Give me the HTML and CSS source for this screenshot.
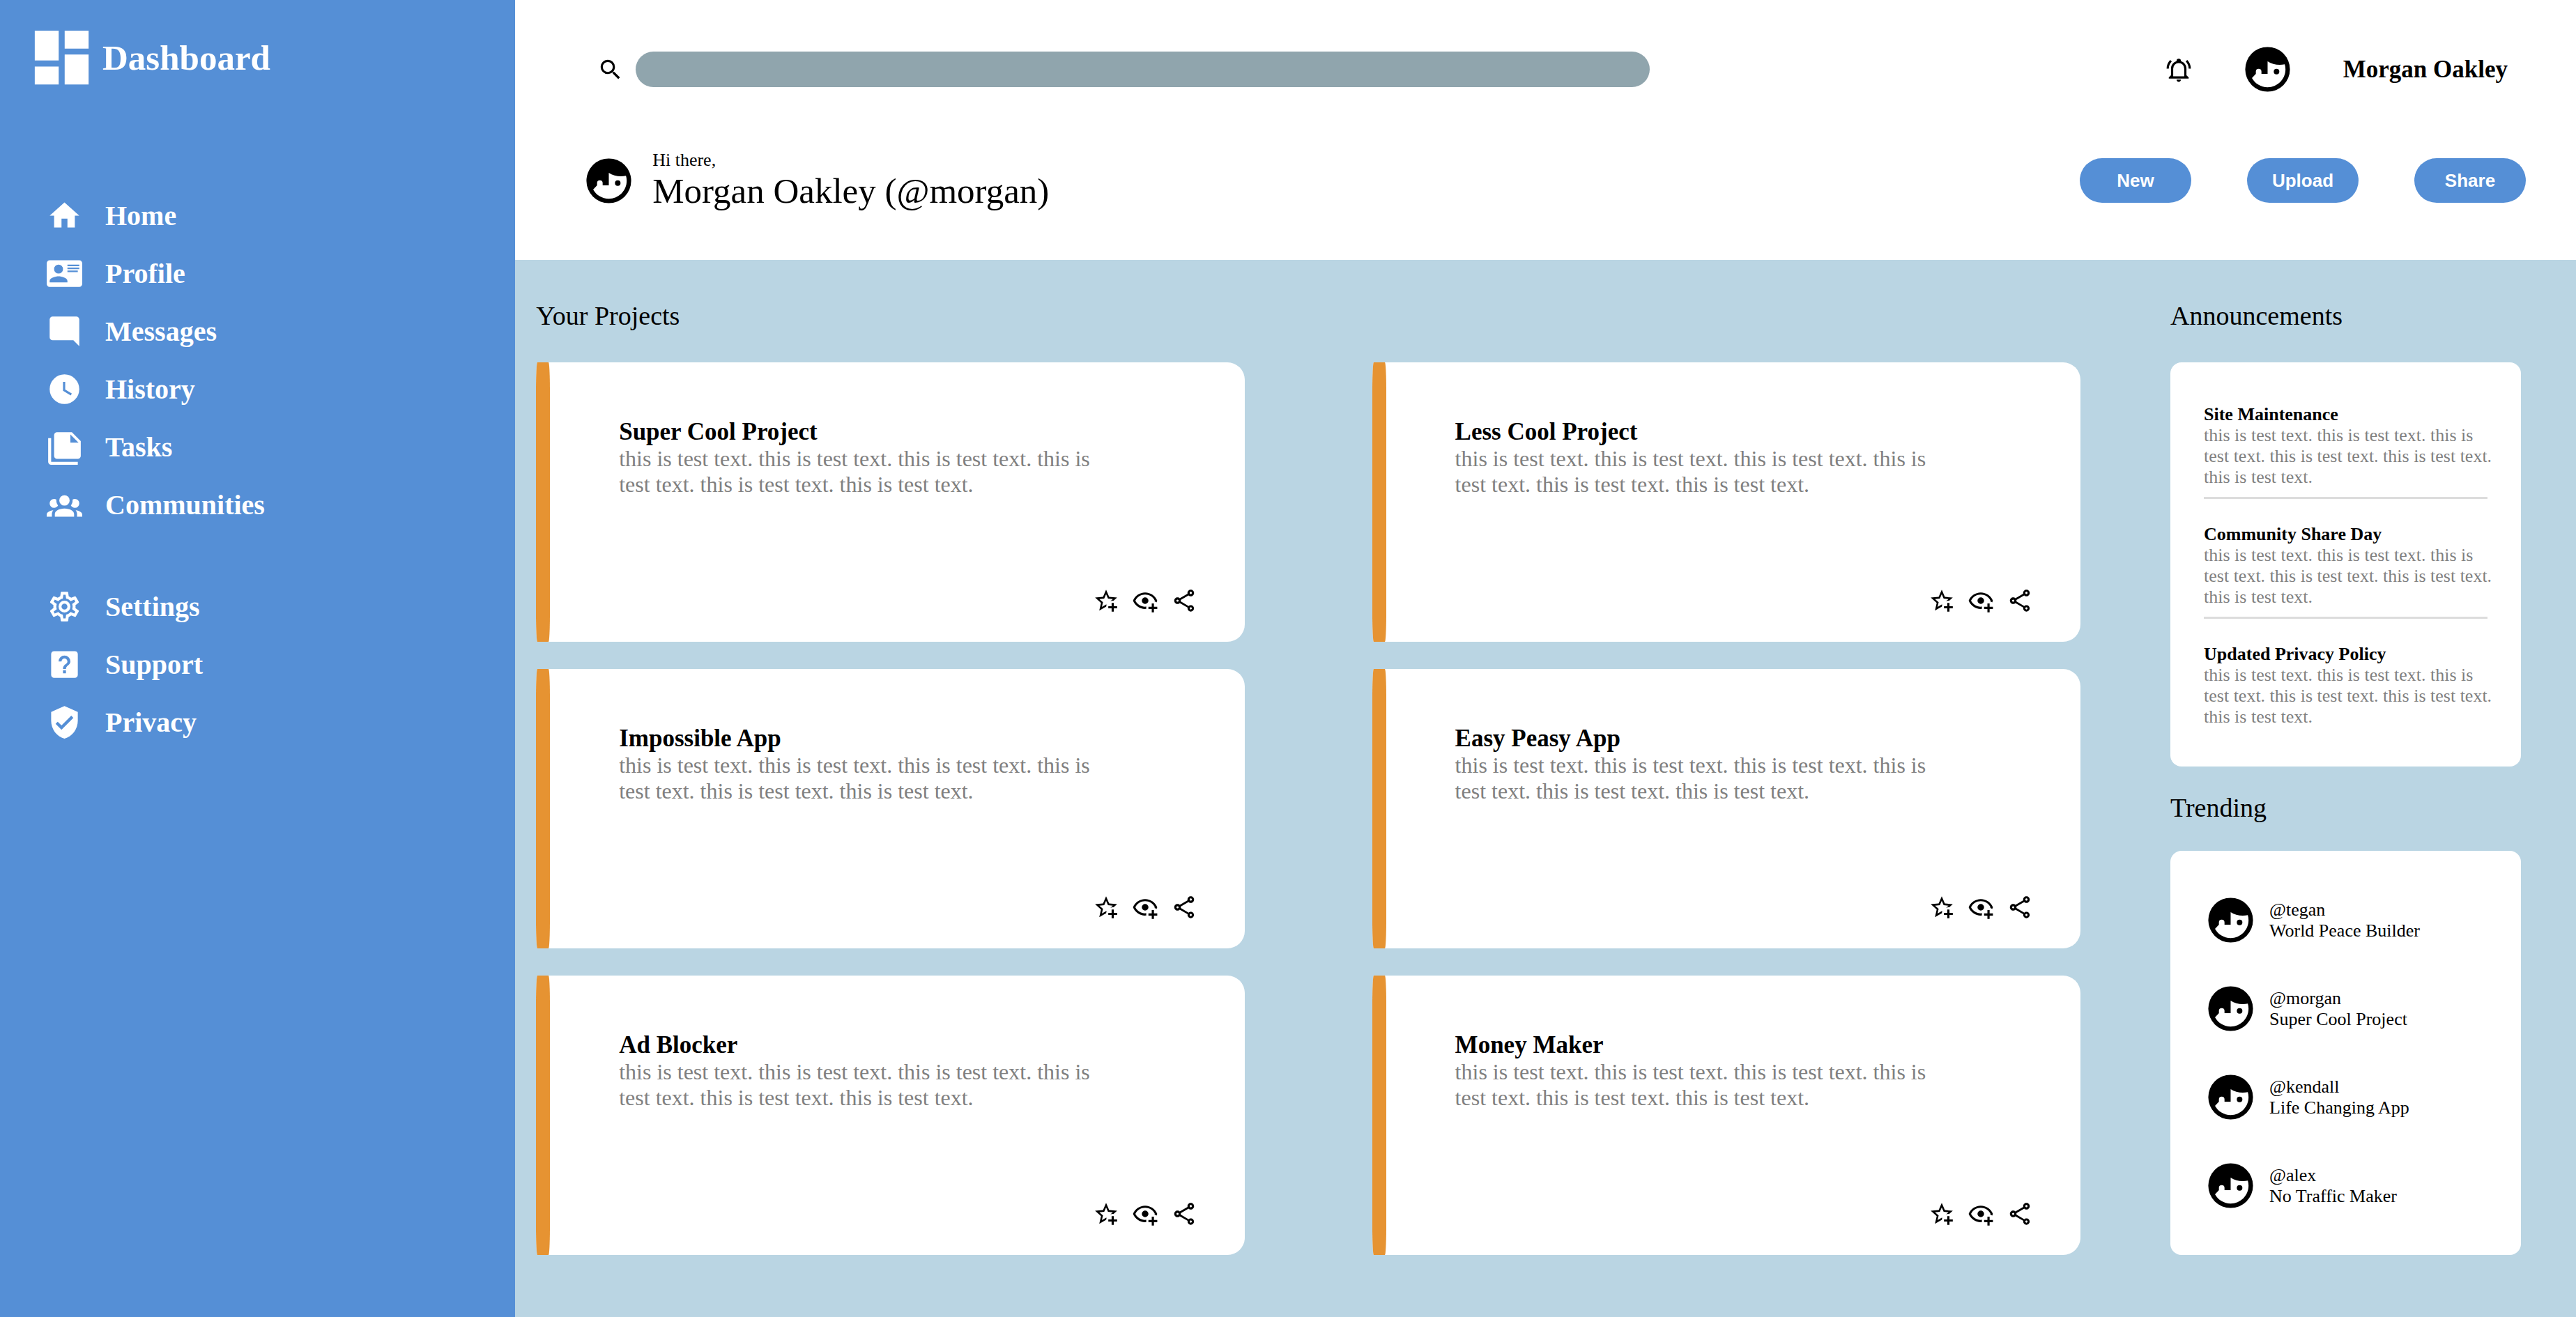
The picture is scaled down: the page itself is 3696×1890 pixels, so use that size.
FILE: index.html
```html
<!DOCTYPE html>
<html lang="en">
<head>
<meta charset="utf-8">
<title>Dashboard</title>
<meta name="viewport" content="width=device-width, initial-scale=1">
<link rel="stylesheet" href="styles.css">
</head>
<body>
<svg class="sprite" aria-hidden="true">
  <symbol id="face" viewBox="0 0 24 24"><path d="M12,2A10,10 0 0,0 2,12A10,10 0 0,0 12,22A10,10 0 0,0 22,12A10,10 0 0,0 12,2M12,8.39C13.57,9.4 15.42,10 17.42,10C18.2,10 18.95,9.91 19.67,9.74C19.88,10.45 20,11.21 20,12C20,16.41 16.41,20 12,20C9,20 6.39,18.34 5,15.89L6.75,14V13A1.25,1.25 0 0,1 8,11.75A1.25,1.25 0 0,1 9.25,13V14H12M16,11.75A1.25,1.25 0 0,0 14.75,13A1.25,1.25 0 0,0 16,14.25A1.25,1.25 0 0,0 17.25,13A1.25,1.25 0 0,0 16,11.75Z"/></symbol>
  <symbol id="star" viewBox="0 0 24 24"><path d="M5.8 21L7.4 14L2 9.2L9.2 8.6L12 2L14.8 8.6L22 9.2L18.8 12H18C17.3 12 16.6 12.1 15.9 12.4L18.1 10.5L13.7 10.1L12 6.1L10.3 10.1L5.9 10.5L9.2 13.4L8.2 17.7L12 15.4L12.5 15.7C12.3 16.2 12.1 16.8 12.1 17.3L5.8 21M17 14V17H14V19H17V22H19V19H22V17H19V14H17Z"/></symbol>
  <symbol id="eye" viewBox="0 0 24 24"><path d="M12,4.5C7,4.5 2.73,7.61 1,12C2.73,16.39 7,19.5 12,19.5C12.36,19.5 12.72,19.5 13.08,19.45C13.03,19.13 13,18.82 13,18.5C13,18.14 13.04,17.78 13.1,17.42C12.74,17.46 12.37,17.5 12,17.5C8.24,17.5 4.83,15.36 3.18,12C4.83,8.64 8.24,6.5 12,6.5C15.76,6.5 19.17,8.64 20.82,12C20.7,12.24 20.56,12.45 20.43,12.68C21.09,12.84 21.72,13.11 22.29,13.5C22.56,13 22.8,12.5 23,12C21.27,7.61 17,4.5 12,4.5M12,9A3,3 0 0,0 9,12A3,3 0 0,0 12,15A3,3 0 0,0 15,12A3,3 0 0,0 12,9M18,14.5V17.5H15V19.5H18V22.5H20V19.5H23V17.5H20V14.5H18Z"/></symbol>
  <symbol id="share" viewBox="0 0 24 24"><path d="M18 16.08C17.24 16.08 16.56 16.38 16.04 16.85L8.91 12.7C8.96 12.47 9 12.24 9 12S8.96 11.53 8.91 11.3L15.96 7.19C16.5 7.69 17.21 8 18 8C19.66 8 21 6.66 21 5S19.66 2 18 2 15 3.34 15 5C15 5.24 15.04 5.47 15.09 5.7L8.04 9.81C7.5 9.31 6.79 9 6 9C4.34 9 3 10.34 3 12S4.34 15 6 15C6.79 15 7.5 14.69 8.04 14.19L15.16 18.34C15.11 18.55 15.08 18.77 15.08 19C15.08 20.61 16.39 21.91 18 21.91S20.92 20.61 20.92 19C20.92 17.39 19.61 16.08 18 16.08M18 4C18.55 4 19 4.45 19 5S18.55 6 18 6 17 5.55 17 5 17.45 4 18 4M6 13C5.45 13 5 12.55 5 12S5.45 11 6 11 7 11.45 7 12 6.55 13 6 13M18 20C17.45 20 17 19.55 17 19S17.45 18 18 18 19 18.45 19 19 18.55 20 18 20Z"/></symbol>
</svg>

<div class="layout">
  <aside class="sidebar">
    <div class="brand">
      <svg class="brand-icon" viewBox="0 0 24 24" aria-hidden="true"><path d="M13,3V9H21V3M13,21H21V11H13M3,21H11V15H3M3,13H11V3H3V13Z"/></svg>
      <h1>Dashboard</h1>
    </div>
    <nav class="nav">
      <ul class="nav-group">
        <li><a href="#"><svg viewBox="0 0 24 24" aria-hidden="true"><path d="M10,20V14H14V20H19V12H22L12,3L2,12H5V20H10Z"/></svg>Home</a></li>
        <li><a href="#"><svg viewBox="0 0 24 24" aria-hidden="true"><path d="M2,3H22C23.05,3 24,3.95 24,5V19C24,20.05 23.05,21 22,21H2C0.95,21 0,20.05 0,19V5C0,3.95 0.95,3 2,3M14,6V7H22V6H14M14,8V9H21.5L22,9V8H14M14,10V11H21V10H14M8,13.91C6,13.91 2,15 2,17V18H14V17C14,15 10,13.91 8,13.91M8,6A3,3 0 0,0 5,9A3,3 0 0,0 8,12A3,3 0 0,0 11,9A3,3 0 0,0 8,6Z"/></svg>Profile</a></li>
        <li><a href="#"><svg viewBox="0 0 24 24" aria-hidden="true"><path d="M22,4A2,2 0 0,0 20,2H4A2,2 0 0,0 2,4V16A2,2 0 0,0 4,18H18L22,22V4Z"/></svg>Messages</a></li>
        <li><a href="#"><svg viewBox="0 0 24 24" aria-hidden="true"><path d="M12,2A10,10 0 0,0 2,12A10,10 0 0,0 12,22A10,10 0 0,0 22,12A10,10 0 0,0 12,2M16.2,16.2L11,13V7H12.5V12.2L17,14.9L16.2,16.2Z"/></svg>History</a></li>
        <li><a href="#"><svg viewBox="0 0 24 24" aria-hidden="true"><path d="M16 9H21.5L16 3.5V9M7 2H17L23 8V18C23 19.11 22.11 20 21 20H7C5.89 20 5 19.1 5 18V4C5 2.89 5.89 2 7 2M3 6V22H21V24H3C1.9 24 1 23.11 1 22V6H3Z"/></svg>Tasks</a></li>
        <li><a href="#"><svg viewBox="0 0 24 24" aria-hidden="true"><path d="M12,5.5A3.5,3.5 0 0,1 15.5,9A3.5,3.5 0 0,1 12,12.5A3.5,3.5 0 0,1 8.5,9A3.5,3.5 0 0,1 12,5.5M5,8C5.56,8 6.08,8.15 6.53,8.42C6.38,9.85 6.8,11.27 7.66,12.38C7.16,13.34 6.16,14 5,14A3,3 0 0,1 2,11A3,3 0 0,1 5,8M19,8A3,3 0 0,1 22,11A3,3 0 0,1 19,14C17.84,14 16.84,13.34 16.34,12.38C17.2,11.27 17.62,9.85 17.47,8.42C17.92,8.15 18.44,8 19,8M5.5,18.25C5.5,16.18 8.41,14.5 12,14.5C15.59,14.5 18.5,16.18 18.5,18.25V20H5.5V18.25M0,20V18.5C0,17.11 1.89,15.94 4.45,15.6C3.86,16.28 3.5,17.22 3.5,18.25V20H0M24,20H20.5V18.25C20.5,17.22 20.14,16.28 19.55,15.6C22.11,15.94 24,17.11 24,18.5V20Z"/></svg>Communities</a></li>
      </ul>
      <ul class="nav-group">
        <li><a href="#"><svg viewBox="0 0 24 24" aria-hidden="true"><path d="M12,8A4,4 0 0,1 16,12A4,4 0 0,1 12,16A4,4 0 0,1 8,12A4,4 0 0,1 12,8M12,10A2,2 0 0,0 10,12A2,2 0 0,0 12,14A2,2 0 0,0 14,12A2,2 0 0,0 12,10M10,22C9.75,22 9.54,21.82 9.5,21.58L9.13,18.93C8.5,18.68 7.96,18.34 7.44,17.94L4.95,18.95C4.73,19.03 4.46,18.95 4.34,18.73L2.34,15.27C2.21,15.05 2.27,14.78 2.46,14.63L4.57,12.97L4.5,12L4.57,11L2.46,9.37C2.27,9.22 2.21,8.95 2.34,8.73L4.34,5.27C4.46,5.05 4.73,4.96 4.95,5.05L7.44,6.05C7.96,5.66 8.5,5.32 9.13,5.07L9.5,2.42C9.54,2.18 9.75,2 10,2H14C14.25,2 14.46,2.18 14.5,2.42L14.87,5.07C15.5,5.32 16.04,5.66 16.56,6.05L19.05,5.05C19.27,4.96 19.54,5.05 19.66,5.27L21.66,8.73C21.79,8.95 21.73,9.22 21.54,9.37L19.43,11L19.5,12L19.43,13L21.54,14.63C21.73,14.78 21.79,15.05 21.66,15.27L19.66,18.73C19.54,18.95 19.27,19.04 19.05,18.95L16.56,17.95C16.04,18.34 15.5,18.68 14.87,18.93L14.5,21.58C14.46,21.82 14.25,22 14,22H10M11.25,4L10.88,6.61C9.68,6.86 8.62,7.5 7.85,8.39L5.44,7.35L4.69,8.65L6.8,10.2C6.4,11.37 6.4,12.64 6.8,13.8L4.68,15.36L5.43,16.66L7.86,15.62C8.63,16.5 9.68,17.14 10.87,17.38L11.24,20H12.76L13.13,17.39C14.32,17.14 15.37,16.5 16.14,15.62L18.57,16.66L19.32,15.36L17.2,13.81C17.6,12.64 17.6,11.37 17.2,10.2L19.31,8.65L18.56,7.35L16.15,8.39C15.38,7.5 14.32,6.86 13.12,6.62L12.75,4H11.25Z"/></svg>Settings</a></li>
        <li><a href="#"><svg viewBox="0 0 24 24" aria-hidden="true"><path fill-rule="evenodd" d="M5,3H19A2,2 0 0,1 21,5V19A2,2 0 0,1 19,21H5A2,2 0 0,1 3,19V5A2,2 0 0,1 5,3ZM11,18H13V16H11V18ZM12,6A4,4 0 0,0 8,10H10A2,2 0 0,1 12,8A2,2 0 0,1 14,10C14,12 11,11.75 11,15H13C13,12.75 16,12.5 16,10A4,4 0 0,0 12,6Z"/></svg>Support</a></li>
        <li><a href="#"><svg viewBox="0 0 24 24" aria-hidden="true"><path d="M10,17L6,13L7.41,11.59L10,14.17L16.59,7.58L18,9M12,1L3,5V11C3,16.55 6.84,21.74 12,23C17.16,21.74 21,16.55 21,11V5L12,1Z"/></svg>Privacy</a></li>
      </ul>
    </nav>
  </aside>

  <div class="page">
    <header class="header">
      <div class="topbar">
        <form class="search" role="search">
          <label for="search"><svg class="icon" viewBox="0 0 24 24" role="img" aria-label="Search"><path d="M9.5,3A6.5,6.5 0 0,1 16,9.5C16,11.11 15.41,12.59 14.44,13.73L14.71,14H15.5L20.5,19L19,20.5L14,15.5V14.71L13.73,14.44C12.59,15.41 11.11,16 9.5,16A6.5,6.5 0 0,1 3,9.5A6.5,6.5 0 0,1 9.5,3M9.5,5C7,5 5,7 5,9.5C5,12 7,14 9.5,14C12,14 14,12 14,9.5C14,7 12,5 9.5,5Z"/></svg></label>
          <input id="search" type="search">
        </form>
        <div class="account">
          <button class="icon-button" type="button" aria-label="Notifications"><svg class="icon" viewBox="0 0 24 24" aria-hidden="true"><path d="M10,21H14C14,22.1 13.1,23 12,23C10.9,23 10,22.1 10,21M21,19V20H3V19L5,17V11C5,7.9 7.03,5.17 10,4.29C10,4.19 10,4.1 10,4A2,2 0 0,1 12,2A2,2 0 0,1 14,4C14,4.1 14,4.19 14,4.29C16.97,5.17 19,7.9 19,11V17L21,19M17,11A5,5 0 0,0 12,6A5,5 0 0,0 7,11V18H17V11M19.75,3.19L18.33,4.61C20.04,6.3 21,8.6 21,11H23C23,8.07 21.84,5.25 19.75,3.19M1,11H3C3,8.6 3.96,6.3 5.67,4.61L4.25,3.19C2.16,5.25 1,8.07 1,11Z"/></svg></button>
          <svg class="avatar" aria-hidden="true"><use href="#face"/></svg>
          <span class="account-name">Morgan Oakley</span>
        </div>
      </div>
      <div class="welcome">
        <svg class="avatar" aria-hidden="true"><use href="#face"/></svg>
        <div class="greeting">
          <p class="greeting-hi">Hi there,</p>
          <p class="greeting-name">Morgan Oakley (@morgan)</p>
        </div>
        <div class="actions">
          <button type="button">New</button>
          <button type="button">Upload</button>
          <button type="button">Share</button>
        </div>
      </div>
    </header>

    <main class="content">
      <section class="projects">
        <h2>Your Projects</h2>
        <div class="cards">
          <article class="card">
            <span class="card-stripe"></span>
            <div class="card-body">
              <h3>Super Cool Project</h3>
              <p>this is test text. this is test text. this is test text. this is test text. this is test text. this is test text.</p>
              <div class="card-tools">
                <button class="icon-button" type="button" aria-label="Star"><svg class="icon"><use href="#star"/></svg></button>
                <button class="icon-button" type="button" aria-label="Watch"><svg class="icon"><use href="#eye"/></svg></button>
                <button class="icon-button" type="button" aria-label="Share"><svg class="icon"><use href="#share"/></svg></button>
              </div>
            </div>
          </article>
          <article class="card">
            <span class="card-stripe"></span>
            <div class="card-body">
              <h3>Less Cool Project</h3>
              <p>this is test text. this is test text. this is test text. this is test text. this is test text. this is test text.</p>
              <div class="card-tools">
                <button class="icon-button" type="button" aria-label="Star"><svg class="icon"><use href="#star"/></svg></button>
                <button class="icon-button" type="button" aria-label="Watch"><svg class="icon"><use href="#eye"/></svg></button>
                <button class="icon-button" type="button" aria-label="Share"><svg class="icon"><use href="#share"/></svg></button>
              </div>
            </div>
          </article>
          <article class="card">
            <span class="card-stripe"></span>
            <div class="card-body">
              <h3>Impossible App</h3>
              <p>this is test text. this is test text. this is test text. this is test text. this is test text. this is test text.</p>
              <div class="card-tools">
                <button class="icon-button" type="button" aria-label="Star"><svg class="icon"><use href="#star"/></svg></button>
                <button class="icon-button" type="button" aria-label="Watch"><svg class="icon"><use href="#eye"/></svg></button>
                <button class="icon-button" type="button" aria-label="Share"><svg class="icon"><use href="#share"/></svg></button>
              </div>
            </div>
          </article>
          <article class="card">
            <span class="card-stripe"></span>
            <div class="card-body">
              <h3>Easy Peasy App</h3>
              <p>this is test text. this is test text. this is test text. this is test text. this is test text. this is test text.</p>
              <div class="card-tools">
                <button class="icon-button" type="button" aria-label="Star"><svg class="icon"><use href="#star"/></svg></button>
                <button class="icon-button" type="button" aria-label="Watch"><svg class="icon"><use href="#eye"/></svg></button>
                <button class="icon-button" type="button" aria-label="Share"><svg class="icon"><use href="#share"/></svg></button>
              </div>
            </div>
          </article>
          <article class="card">
            <span class="card-stripe"></span>
            <div class="card-body">
              <h3>Ad Blocker</h3>
              <p>this is test text. this is test text. this is test text. this is test text. this is test text. this is test text.</p>
              <div class="card-tools">
                <button class="icon-button" type="button" aria-label="Star"><svg class="icon"><use href="#star"/></svg></button>
                <button class="icon-button" type="button" aria-label="Watch"><svg class="icon"><use href="#eye"/></svg></button>
                <button class="icon-button" type="button" aria-label="Share"><svg class="icon"><use href="#share"/></svg></button>
              </div>
            </div>
          </article>
          <article class="card">
            <span class="card-stripe"></span>
            <div class="card-body">
              <h3>Money Maker</h3>
              <p>this is test text. this is test text. this is test text. this is test text. this is test text. this is test text.</p>
              <div class="card-tools">
                <button class="icon-button" type="button" aria-label="Star"><svg class="icon"><use href="#star"/></svg></button>
                <button class="icon-button" type="button" aria-label="Watch"><svg class="icon"><use href="#eye"/></svg></button>
                <button class="icon-button" type="button" aria-label="Share"><svg class="icon"><use href="#share"/></svg></button>
              </div>
            </div>
          </article>
        </div>
      </section>

      <div class="side">
        <section>
          <h2>Announcements</h2>
          <div class="panel announcements">
            <article>
              <h3>Site Maintenance</h3>
              <p>this is test text. this is test text. this is test text. this is test text. this is test text. this is test text.</p>
            </article>
            <article>
              <h3>Community Share Day</h3>
              <p>this is test text. this is test text. this is test text. this is test text. this is test text. this is test text.</p>
            </article>
            <article>
              <h3>Updated Privacy Policy</h3>
              <p>this is test text. this is test text. this is test text. this is test text. this is test text. this is test text.</p>
            </article>
          </div>
        </section>
        <section>
          <h2>Trending</h2>
          <ul class="panel trending">
            <li><svg class="avatar" aria-hidden="true"><use href="#face"/></svg><div><p>@tegan</p><p>World Peace Builder</p></div></li>
            <li><svg class="avatar" aria-hidden="true"><use href="#face"/></svg><div><p>@morgan</p><p>Super Cool Project</p></div></li>
            <li><svg class="avatar" aria-hidden="true"><use href="#face"/></svg><div><p>@kendall</p><p>Life Changing App</p></div></li>
            <li><svg class="avatar" aria-hidden="true"><use href="#face"/></svg><div><p>@alex</p><p>No Traffic Maker</p></div></li>
          </ul>
        </section>
      </div>
    </main>
  </div>
</div>
</body>
</html>
```
FILE: styles.css
```css
:root {
  --blue: #558fd6;
  --sky: #bad5e3;
  --slate: #90a5ad;
  --orange: #e69332;
}

* {
  box-sizing: border-box;
}

body {
  margin: 0;
  font-family: "Liberation Serif", "Times New Roman", serif;
  color: #000;
}

h1, h2, h3, p, ul {
  margin: 0;
  padding: 0;
}

ul {
  list-style: none;
}

svg {
  display: block;
  flex: none;
}

.sprite {
  display: none;
}

.icon {
  width: 38px;
  height: 38px;
}

.avatar {
  width: 77px;
  height: 77px;
}

.icon-button {
  padding: 0;
  border: 0;
  background: none;
  cursor: pointer;
}

.layout {
  display: grid;
  grid-template-columns: 1fr 4fr;
  min-height: 100vh;
}

/* Sidebar */

.sidebar {
  padding: 31px 37px;
  background: var(--blue);
  color: #fff;
  fill: #fff;
}

.brand {
  display: flex;
  align-items: center;
  gap: 7px;
}

.brand-icon {
  width: 103px;
  height: 103px;
}

.brand h1 {
  font-size: 51px;
  line-height: 58px;
}

.nav {
  display: grid;
  gap: 95px;
  padding: 150px 30px 0;
}

.nav-group {
  display: grid;
  gap: 32px;
}

.nav a {
  display: flex;
  align-items: center;
  gap: 33px;
  color: inherit;
  font-size: 40px;
  font-weight: bold;
  line-height: 46px;
  text-decoration: none;
}

.nav svg {
  width: 51px;
  height: 51px;
}

/* Header */

.page {
  display: flex;
  flex-direction: column;
}

.header {
  display: grid;
  gap: 77px;
  padding: 61px 0 70px;
  background: #fff;
}

.topbar {
  display: flex;
  align-items: center;
  justify-content: space-between;
  padding: 0 98px 0 118px;
}

.search {
  display: flex;
  align-items: center;
  flex: 0 1 1510px;
  gap: 17px;
}

.search input {
  flex: 1;
  min-width: 0;
  height: 51px;
  padding: 0 26px;
  border: 0;
  border-radius: 26px;
  background: var(--slate);
  font: 26px/30px "Liberation Sans", Arial, sans-serif;
}

.account {
  display: flex;
  align-items: center;
  gap: 70px;
}

.account-name {
  font-size: 35px;
  font-weight: bold;
  line-height: 40px;
}

.welcome {
  display: flex;
  align-items: center;
  gap: 24px;
  padding: 0 72px 0 96px;
}

.greeting-hi {
  font-size: 26px;
  line-height: 30px;
}

.greeting-name {
  font-size: 51px;
  line-height: 58px;
}

.actions {
  display: flex;
  gap: 80px;
  margin-left: auto;
}

.actions button {
  width: 160px;
  height: 64px;
  padding: 0;
  border: 0;
  border-radius: 32px;
  background: var(--blue);
  color: #fff;
  font: bold 26px/30px "Liberation Sans", Arial, sans-serif;
  cursor: pointer;
}

/* Content */

.content {
  display: grid;
  grid-template-columns: minmax(0, 2216fr) minmax(0, 503fr);
  column-gap: 129px;
  flex: 1;
  align-items: start;
  padding: 58px 79px 89px 30px;
  background: var(--sky);
}

h2 {
  margin-bottom: 45px;
  font-size: 38px;
  font-weight: normal;
  line-height: 44px;
}

.cards {
  display: grid;
  grid-template-columns: 1fr 1fr;
  gap: 39px 183px;
}

.card {
  display: flex;
  min-height: 401px;
  border-radius: 2px 25px 25px 2px / 40px 25px 25px 40px;
  background: #fff;
}

.card-stripe {
  flex: none;
  width: 20px;
  border-radius: 10%;
  background: var(--orange);
}

.card-body {
  display: flex;
  flex: 1;
  flex-direction: column;
  padding: 80px 68px 40px 99px;
}

.card h3 {
  font-size: 35px;
  line-height: 40px;
}

.card p {
  max-width: 700px;
  color: #808080;
  font-size: 32px;
  line-height: 37px;
}

.card-tools {
  display: flex;
  justify-content: flex-end;
  gap: 18px;
  margin-top: auto;
}

.side {
  display: grid;
  gap: 37px;
}

.side section + section h2 {
  margin-bottom: 40px;
}

.panel {
  border-radius: 16px;
  background: #fff;
  font-size: 26px;
  line-height: 30px;
}

.announcements {
  display: grid;
  gap: 36px;
  padding: 60px 48px 56px;
}

.announcements article:not(:last-child) {
  padding-bottom: 13px;
  border-bottom: 3px solid #dcdcdc;
}

.announcements h3 {
  font-size: inherit;
}

/* The text column runs slightly past the divider so three sentences fit a line */
.announcements p {
  margin-right: -8px;
  color: #808080;
}

.trending {
  display: grid;
  gap: 50px;
  padding: 61px 48px;
}

.trending li {
  display: flex;
  align-items: center;
  gap: 17px;
}
```
